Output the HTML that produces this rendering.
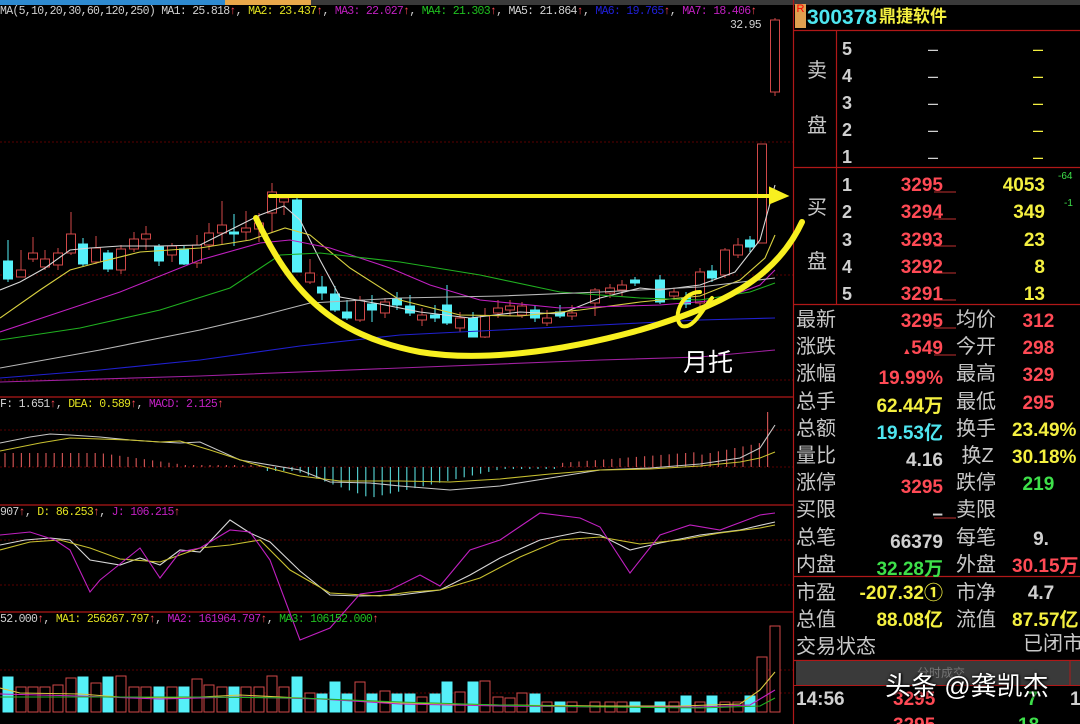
<!DOCTYPE html>
<html><head><meta charset="utf-8"><style>
html,body{margin:0;padding:0;background:#000;width:1080px;height:724px;overflow:hidden}
body{position:relative;font-family:"Liberation Sans","Noto Sans CJK SC",sans-serif}
.t{position:absolute;white-space:nowrap;line-height:1}
.m{font-family:"Liberation Mono","Noto Sans CJK SC",monospace;font-size:11.5px;letter-spacing:-0.7px}
.lab{color:#c8c8c8;font-size:20px}
.n{font-weight:bold;font-size:19px;text-align:right}
.r{color:#ff4a55}.y{color:#f4f040}.c{color:#4ee6f0}.g{color:#3ee04a}.w{color:#d0d0d0}
</style></head><body>
<div style="position:absolute;left:0;top:0;width:225px;height:5px;background:#2e8ad0"></div>
<div style="position:absolute;left:225px;top:0;width:86px;height:5px;background:#e9a84a"></div>
<div style="position:absolute;left:311px;top:0;width:769px;height:5px;background:#3a3a3a"></div>
<svg id="ch" width="1080" height="724" style="position:absolute;left:0;top:0">
<g stroke="#5a0000" stroke-width="1" stroke-dasharray="2,2">
<line x1="0" y1="142" x2="793" y2="142"/><line x1="0" y1="275" x2="793" y2="275"/><line x1="0" y1="380" x2="793" y2="380"/>
<line x1="0" y1="430" x2="793" y2="430"/><line x1="0" y1="467" x2="793" y2="467"/>
<line x1="0" y1="540" x2="793" y2="540"/><line x1="0" y1="585" x2="793" y2="585"/>
<line x1="0" y1="670" x2="793" y2="670"/><line x1="0" y1="693" x2="793" y2="693"/>
</g>
<g stroke="#b01818" stroke-width="1.2">
<line x1="0" y1="397" x2="793" y2="397"/><line x1="0" y1="505" x2="793" y2="505"/><line x1="0" y1="612" x2="793" y2="612"/>
<line x1="793.5" y1="0" x2="793.5" y2="724"/>
</g>
<g id="cd"></g>
<g fill="none" stroke-width="1.1">
<polyline stroke="#d8d8d8" points="0,290 20,282 45,268 70,250 90,248 120,246 160,246 200,245 230,230 260,215 284,206 300,220 320,260 340,297 380,304 420,312 470,318 520,312 560,314 600,298 640,288 660,290 700,285 735,272 760,240 775,185"/>
<polyline stroke="#d8d040" points="0,318 40,290 70,270 100,262 140,252 200,248 250,240 285,228 310,235 350,268 400,300 460,315 520,316 580,310 640,302 700,296 740,280 765,258 775,235"/>
<polyline stroke="#c020c0" points="0,332 60,312 120,292 200,260 260,243 290,240 330,248 390,268 430,285 480,300 560,308 660,305 720,300 760,285 775,270"/>
<polyline stroke="#20b020" points="0,340 80,328 160,310 230,288 280,255 320,253 400,262 480,275 560,292 640,298 700,300 750,292 775,283"/>
<polyline stroke="#b8b8b8" points="0,368 100,350 200,330 260,316 310,303 400,298 500,296 600,292 700,287 775,278"/>
<polyline stroke="#2020d0" points="0,378 100,370 200,360 300,346 400,335 500,330 600,325 700,320 775,318"/>
<polyline stroke="#a020a0" points="0,382 200,376 400,368 600,360 700,357 775,350"/>
</g>
<g fill="none" stroke-linecap="round">
<line x1="270" y1="196" x2="775" y2="196" stroke="#f8f020" stroke-width="4"/>
<polygon points="770,188 787,196 770,203" fill="#f8f020" stroke="#f8f020" stroke-width="2"/>
<path d="M256,218 C290,290 330,335 420,352 C480,362 560,352 640,330 C720,306 775,280 802,222" stroke="#f8f020" stroke-width="6"/>
<path d="M700,292 C680,292 672,320 682,326 C694,330 705,305 712,298" stroke="#f8f020" stroke-width="4"/>
</g>
<g fill="none" stroke-width="1.1">
<polyline stroke="#c8c8c8" points="0,443 30,437 50,434 70,435 100,437 130,440 160,442 180,443 200,442 240,460 300,470 330,482 370,483 400,486 450,490 500,486 550,478 600,470 650,468 700,464 740,458 760,448 775,425"/>
<polyline stroke="#c8c030" points="0,451 40,443 70,438 100,439 130,440 160,442 180,441 210,450 250,463 300,476 340,481 400,481 450,482 500,479 550,474 600,470 650,469 700,466 740,462 760,458 775,452"/>
<polyline stroke="#d8d8d8" points="0,545 25,540 50,538 70,540 90,560 120,565 140,558 160,565 180,550 200,552 230,520 250,533 270,542 300,571 330,595 360,596 400,595 440,590 470,575 500,558 540,540 580,532 600,535 630,550 660,543 700,535 740,530 775,522"/>
<polyline stroke="#c8c030" points="0,550 30,542 60,540 90,548 120,559 160,562 200,548 230,545 260,540 290,570 330,593 380,596 410,592 440,590 480,578 520,557 560,540 600,537 640,544 680,540 720,533 760,528 775,525"/>
<polyline stroke="#c020c0" points="0,535 30,532 55,540 70,550 90,592 100,580 120,564 140,548 160,578 180,552 200,548 230,530 250,532 270,560 300,640 330,628 360,594 390,590 420,575 440,586 470,550 500,540 540,513 580,518 600,527 630,573 660,535 690,525 720,530 760,515 775,513"/>
</g>
<g fill="none" stroke-width="1.1">
<polyline stroke="#d8c840" points="0,688 20,693 80,694 120,697 180,698 240,695 320,699 400,703 500,705 600,706 680,706 740,704 760,690 775,672"/>
<polyline stroke="#c020c0" points="0,694 80,696 160,699 240,697 320,699 400,704 500,706 600,707 700,707 750,705 775,690"/>
<polyline stroke="#20b020" points="0,697 100,697 200,697 300,698 400,702 500,705 600,707 700,708 760,706 775,698"/>
</g>
</svg>
<script>
var C=[[8,261,279,1,240,282],[21,270,277,0,250,277],[33,253,259,0,237,262],[45,259,267,0,250,270],[58,253,265,0,248,270],[71,234,253,0,212,255],[83,244,264,1,238,266],[96,248,262,0,236,264],[108,253,269,1,250,272],[121,249,270,0,245,274],[134,239,249,0,232,252],[146,234,239,0,226,250],[159,247,261,1,244,266],[172,246,255,0,243,262],[184,249,264,1,246,265],[197,245,263,0,235,268],[209,233,245,0,223,250],[222,225,233,0,201,244],[234,232,234,1,214,246],[246,228,232,0,211,240],[259,223,229,0,213,242],[272,192,213,0,183,232],[284,198,202,0,195,215],[297,200,272,1,196,272],[310,273,282,0,259,284],[322,287,293,1,276,300],[335,294,310,1,286,312],[347,312,318,1,300,320],[360,300,320,0,296,322],[372,304,310,1,295,322],[385,302,313,0,298,318],[397,299,305,1,292,310],[410,306,313,1,295,316],[422,315,320,0,308,326],[435,315,318,1,305,322],[447,305,323,1,285,325],[460,318,328,0,312,332],[473,318,337,1,312,337],[485,316,337,0,308,338],[498,308,313,0,300,318],[510,306,310,0,300,316],[522,306,315,0,302,318],[535,310,318,1,305,322],[547,318,323,0,310,326],[560,312,316,1,305,318],[572,313,316,0,305,320],[595,290,303,0,288,316],[610,288,293,0,284,298],[622,285,290,0,280,296],[635,280,283,1,277,286],[660,280,302,1,275,304],[674,292,296,0,288,300],[686,298,304,1,292,308],[700,272,303,0,268,306],[712,271,278,1,265,282],[725,250,275,0,248,278],[738,245,255,0,238,258],[750,240,247,1,236,252],[762,144,243,0,144,243],[775,20,92,0,18,96]];
var s="";
C.forEach(function(c,i){var col=c[3]?"#55f0f8":"#d04848";
s+='<line x1="'+c[0]+'" y1="'+c[4]+'" x2="'+c[0]+'" y2="'+c[5]+'" stroke="'+col+'" stroke-width="1"/>';
s+='<rect x="'+(c[0]-4.5)+'" y="'+c[1]+'" width="9" height="'+Math.max(2,c[2]-c[1])+'" fill="'+(c[3]?col:'#000')+'" stroke="'+col+'" stroke-width="1"/>';
var v=c[3]?(c[2]-c[1]>15?30:18):(c[2]-c[1])+10;if(i<24)v=Math.max(v,20)+5;if(c[0]==762)v=55;if(c[0]==775)v=86;if(c[0]>540&&c[0]<740)v=Math.min(v,10);if(c[0]>=686&&c[0]<=750&&c[3])v=16;
s+='<rect x="'+(c[0]-5)+'" y="'+(712-v)+'" width="10" height="'+v+'" fill="'+(c[3]?col:'#000')+'" stroke="'+col+'"/>';});
// MACD histogram
for(var x=5;x<=775;x+=8.2){var h;
if(x<100)h=14;else if(x<190)h=14-(x-100)*0.14;else if(x<260)h=2;else if(x<290)h=-2;
else if(x<370)h=-2-(x-290)*0.36;else if(x<500)h=-31+(x-370)*0.22;else if(x<560)h=-2;
else if(x<700)h=4+(x-560)*0.08;else if(x<765)h=12+(x-700)*0.2;else h=55;
if(x>230&&x<300)h=(x<260?2:-4);
if(x>=770)h=57;
var col=h>0?'#c85050':'#50c8c8';
s+='<line x1="'+x.toFixed(1)+'" y1="467" x2="'+x.toFixed(1)+'" y2="'+(467-h).toFixed(1)+'" stroke="'+col+'" stroke-width="1.2"/>';}
document.getElementById("cd").innerHTML=s;
</script>
<div class="t m" style="left:0;top:6px;color:#d0d0d0">MA(5,10,20,30,60,120,250) MA1: 25.818<span class="r">↑</span>, <span style="color:#e0e020">MA2: 23.437</span><span class="r">↑</span>, <span style="color:#c020c0">MA3: 22.027</span><span class="r">↑</span>, <span style="color:#20c020">MA4: 21.303</span><span class="r">↑</span>, MA5: 21.864<span class="r">↑</span>, <span style="color:#2020d8">MA6: 19.765</span><span class="r">↑</span>, <span style="color:#c020c0">MA7: 18.406</span><span class="r">↑</span></div>
<div class="t m" style="left:730px;top:20px;color:#d0d0d0">32.95</div>
<div class="t" style="left:683px;top:351px;color:#fff;font-size:25px">月托</div>
<div class="t m" style="left:0;top:399px;color:#d0d0d0">F: 1.651<span class="r">↑</span>, <span style="color:#e0e020">DEA: 0.589</span><span class="r">↑</span>, <span style="color:#c020c0">MACD: 2.125</span><span class="r">↑</span></div>
<div class="t m" style="left:0;top:507px;color:#d0d0d0">907<span class="r">↑</span>, <span style="color:#e0e020">D: 86.253</span><span class="r">↑</span>, <span style="color:#c020c0">J: 106.215</span><span class="r">↑</span></div>
<div class="t m" style="left:0;top:614px;color:#d0d0d0">52.000<span class="r">↑</span>, <span style="color:#e0e020">MA1: 256267.797</span><span class="r">↑</span>, <span style="color:#c020c0">MA2: 161964.797</span><span class="r">↑</span>, <span style="color:#20c020">MA3: 106152.000</span><span class="r">↑</span></div>

<div style="position:absolute;left:795px;top:4px;width:11px;height:24px;background:#e0a050;color:#f00;font-size:11px;line-height:11px;text-align:center">R</div>
<div class="t c" style="left:807px;top:7px;font-size:21px;font-weight:bold">300378</div>
<div class="t y" style="left:879px;top:8px;font-size:17px;font-weight:bold">鼎捷软件</div>
<svg width="286" height="724" style="position:absolute;left:794px;top:0">
<g stroke="#b01818" stroke-width="1.2">
<line x1="0" y1="30.5" x2="286" y2="30.5"/><line x1="0" y1="167.5" x2="286" y2="167.5"/><line x1="0" y1="304.5" x2="286" y2="304.5"/>
<line x1="0" y1="576.5" x2="286" y2="576.5"/><line x1="42.5" y1="30" x2="42.5" y2="304"/>
<line x1="0" y1="660.5" x2="286" y2="660.5"/>
</g>
<rect x="2" y="661" width="286" height="24" fill="#3a3a3a"/>
<line x1="0" y1="685.5" x2="286" y2="685.5" stroke="#b01818"/>
<line x1="276" y1="661" x2="276" y2="685" stroke="#b01818"/>
<g stroke="#c03030"><line x1="140" y1="192" x2="162" y2="192"/><line x1="140" y1="219" x2="162" y2="219"/><line x1="140" y1="246" x2="162" y2="246"/><line x1="140" y1="273" x2="162" y2="273"/><line x1="140" y1="300" x2="162" y2="300"/><line x1="140" y1="328" x2="162" y2="328"/><line x1="140" y1="355" x2="162" y2="355"/><line x1="140" y1="518" x2="162" y2="518"/></g>
</svg>
<div class="t lab" style="left:807px;top:61px">卖</div><div class="t lab" style="left:807px;top:116px">盘</div>
<div class="t lab" style="left:807px;top:198px">买</div><div class="t lab" style="left:807px;top:252px">盘</div>
<div class="t w" style="left:842px;top:36px;font-size:18px;font-weight:bold;line-height:27px">5<br>4<br>3<br>2<br>1</div>
<div class="t w" style="left:842px;top:172px;font-size:18px;font-weight:bold;line-height:27.3px">1<br>2<br>3<br>4<br>5</div>
<div class="t w" style="left:928px;top:36px;font-size:18px;line-height:27px">–<br>–<br>–<br>–<br>–</div>
<div class="t y" style="left:1033px;top:36px;font-size:18px;line-height:27px">–<br>–<br>–<br>–<br>–</div>
<div class="t n r" style="right:137px;top:172px;line-height:27.3px">3295<br>3294<br>3293<br>3292<br>3291</div>
<div class="t n y" style="right:35px;top:172px;line-height:27.3px">4053<br>349<br>23<br>8<br>13</div>
<div class="t g" style="left:1058px;top:172px;font-size:10px">-64</div>
<div class="t g" style="left:1064px;top:199px;font-size:10px">-1</div>

<div class="t lab" style="left:796px;top:307px;line-height:27.2px">最新<br>涨跌<br>涨幅<br>总手<br>总额<br>量比<br>涨停<br>买限<br>总笔<br>内盘</div>
<div class="t lab" style="left:956px;top:307px;line-height:27.2px">均价<br>今开<br>最高<br>最低<br>换手<br>&nbsp;换Z<br>跌停<br>卖限<br>每笔<br>外盘</div>
<div class="t n" style="right:137px;top:308px;line-height:27.2px"><span class="r">3295</span><br><span class="r"><small style="font-size:9px">▲</small>549</span><br><span class="r">19.99%</span><br><span class="y">62.44万</span><br><span class="c">19.53亿</span><br><span class="w">4.16</span><br><span class="r">3295</span><br><span class="w">–</span><br><span class="w">66379</span><br><span class="g">32.28万</span></div>
<div class="t n" style="left:1012px;top:308px;line-height:27.2px;text-align:left"><span class="r">&nbsp;&nbsp;312</span><br><span class="r">&nbsp;&nbsp;298</span><br><span class="r">&nbsp;&nbsp;329</span><br><span class="r">&nbsp;&nbsp;295</span><br><span class="y">23.49%</span><br><span class="y">30.18%</span><br><span class="g">&nbsp;&nbsp;219</span><br><br><span class="w">&nbsp;&nbsp;&nbsp;&nbsp;9.</span><br><span class="r">30.15万</span></div>
<div class="t lab" style="left:796px;top:580px;line-height:27px">市盈<br>总值<br>交易状态</div>
<div class="t lab" style="left:956px;top:580px;line-height:27px">市净<br>流值</div>
<div class="t n" style="right:137px;top:580px;line-height:27px"><span class="y">-207.32①</span><br><span class="y">88.08亿</span></div>
<div class="t n" style="left:1012px;top:580px;line-height:27px;text-align:left"><span class="w">&nbsp;&nbsp;&nbsp;4.7</span><br><span class="y">87.57亿</span></div>
<div class="t lab" style="left:1023px;top:634px">已闭市</div>
<div class="t" style="left:917px;top:667px;color:#777;font-size:12px">分时成交</div>
<div class="t w" style="left:796px;top:690px;font-size:19px;font-weight:bold">14:56</div>
<div class="t r" style="left:893px;top:690px;font-size:19px;font-weight:bold">3295</div>
<div class="t g" style="left:1027px;top:690px;font-size:19px;font-weight:bold">7</div>
<div class="t w" style="left:1070px;top:690px;font-size:19px;font-weight:bold">1</div>
<div class="t r" style="left:893px;top:716px;font-size:19px;font-weight:bold">3295</div>
<div class="t g" style="left:1018px;top:716px;font-size:19px;font-weight:bold">18</div>
<div class="t" style="left:885px;top:673px;color:#fff;font-size:26px;text-shadow:0 0 3px #000,1px 1px 2px #000">头条 @龚凯杰</div>
</body></html>
